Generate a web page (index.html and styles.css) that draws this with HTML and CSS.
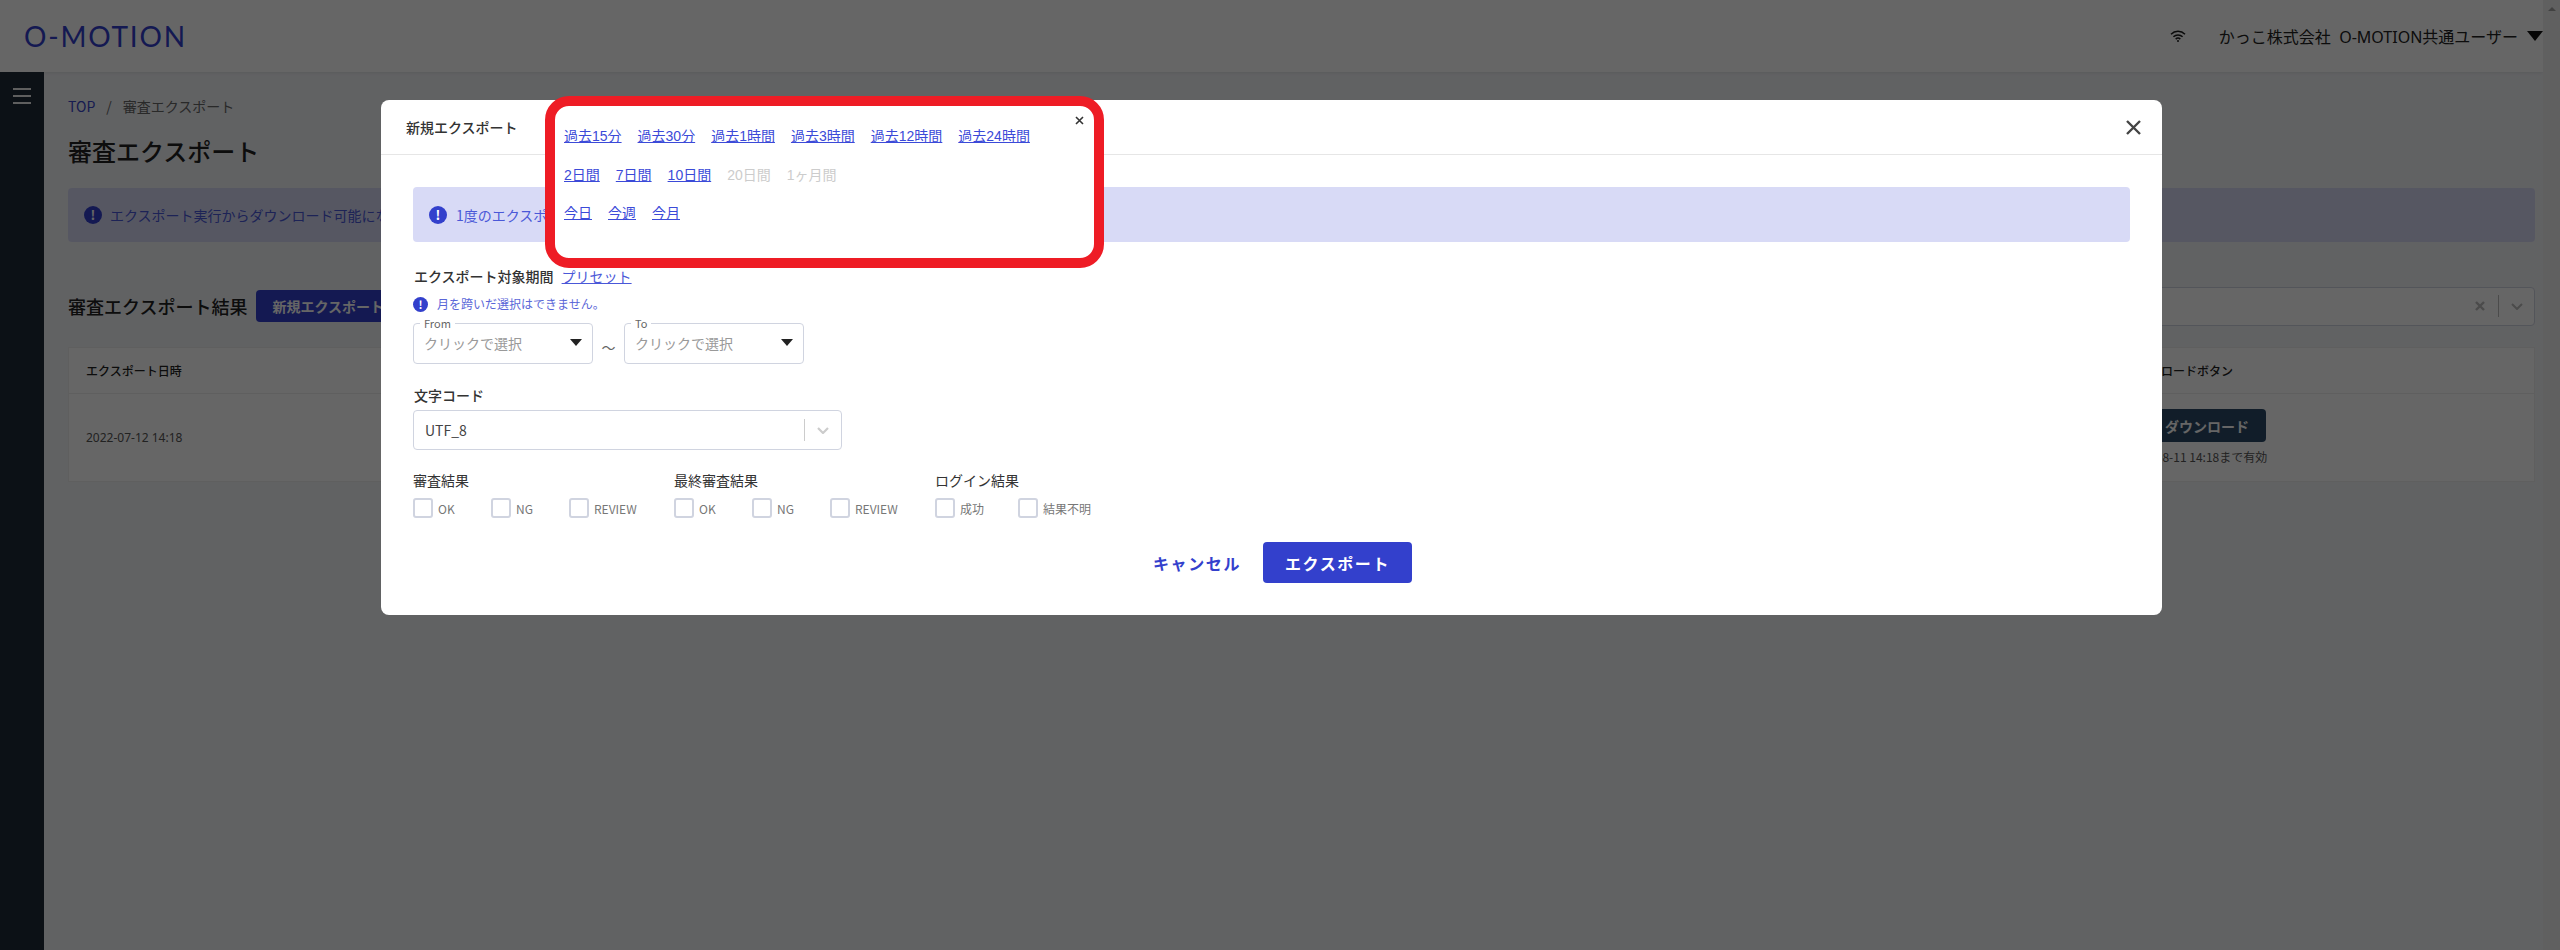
FILE: index.html
```html
<!DOCTYPE html>
<html lang="ja">
<head>
  <meta charset="UTF-8">
  <title>審査エクスポート - O-MOTION</title>
  <link rel="stylesheet" href="styles.css">
</head>
<body>
  <div class="page">
    <!-- Header -->
    <header class="topbar">
      <span class="logo">O-MOTION</span>
      <div class="topbar-right">
        <svg class="wifi" width="16" height="12" viewBox="0 0 16 12">
          <path d="M1 4.2a10 10 0 0 1 14 0M3.4 6.8a6.6 6.6 0 0 1 9.2 0M5.7 9.1a3.3 3.3 0 0 1 4.6 0" fill="none" stroke="#1a1a1a" stroke-width="1.5"/>
          <circle cx="8" cy="11" r="1" fill="#1a1a1a"/>
        </svg>
        <span class="user">かっこ株式会社&nbsp;&nbsp;O-MOTION共通ユーザー</span>
        <span class="user-caret"></span>
      </div>
    </header>

    <div class="main">
      <aside class="sidebar">
        <div class="burger"><i></i><i></i><i></i></div>
      </aside>

      <div class="content">
        <div class="crumbs"><a>TOP</a><span class="sep">/</span><span>審査エクスポート</span></div>
        <h1>審査エクスポート</h1>
        <div class="notice">
          <span class="info">!</span>
          <span>エクスポート実行からダウンロード可能にな</span>
        </div>
        <div class="result-head">
          <h2>審査エクスポート結果</h2>
          <button class="new-btn">新規エクスポート</button>
          <div class="filter">
            <svg width="10" height="10" viewBox="0 0 10 10"><path d="M1 1l8 8M9 1L1 9" stroke="#bbb" stroke-width="2.4"/></svg>
            <span class="filter-sep"></span>
            <svg width="12" height="7" viewBox="0 0 12 7"><path d="M1 1l5 5 5-5" fill="none" stroke="#bbb" stroke-width="2"/></svg>
          </div>
        </div>
        <div class="table">
          <div class="table-head">
            <span>エクスポート日時</span>
            <span class="col-dl">ダウンロードボタン</span>
          </div>
          <div class="table-row">
            <span class="cell-date">2022-07-12 14:18</span>
            <div class="col-dl">
              <button class="dl-btn">ダウンロード</button>
              <div class="dl-note">2022-08-11 14:18まで有効</div>
            </div>
          </div>
        </div>
      </div>
    </div>
    <div class="scrollbar"><span class="scroll-up"></span></div>
  </div>

  <!-- Modal -->
  <div class="overlay"></div>
  <div class="modal">
    <div class="modal-head">
      <span class="modal-title">新規エクスポート</span>
      <svg class="modal-close" width="15" height="15" viewBox="0 0 15 15"><path d="M1 1l13 13M14 1L1 14" stroke="#444" stroke-width="2.4"/></svg>
    </div>
    <div class="modal-body">
      <div class="modal-notice">
        <span class="info">!</span>
        <span>1度のエクスポ</span>
      </div>

      <div class="period-label">エクスポート対象期間<a class="preset">プリセット</a></div>
      <div class="period-hint"><span class="info small">!</span><span>月を跨いだ選択はできません。</span></div>
      <div class="range">
        <div class="date-box">
          <span class="legend">From</span>
          <span class="placeholder">クリックで選択</span>
          <span class="caret"></span>
        </div>
        <span class="tilde">～</span>
        <div class="date-box">
          <span class="legend">To</span>
          <span class="placeholder">クリックで選択</span>
          <span class="caret"></span>
        </div>
      </div>

      <div class="field-label">文字コード</div>
      <div class="select">
        <span>UTF_8</span>
        <span class="select-sep"></span>
        <svg width="12" height="7" viewBox="0 0 12 7"><path d="M1 1l5 5 5-5" fill="none" stroke="#ccc" stroke-width="2.2"/></svg>
      </div>

      <div class="checks">
        <div class="check-group g1">
          <div class="group-label">審査結果</div>
          <div class="check-row">
            <label class="check w78"><i></i>OK</label>
            <label class="check w78"><i></i>NG</label>
            <label class="check"><i></i>REVIEW</label>
          </div>
        </div>
        <div class="check-group g2">
          <div class="group-label">最終審査結果</div>
          <div class="check-row">
            <label class="check w78"><i></i>OK</label>
            <label class="check w78"><i></i>NG</label>
            <label class="check"><i></i>REVIEW</label>
          </div>
        </div>
        <div class="check-group">
          <div class="group-label">ログイン結果</div>
          <div class="check-row">
            <label class="check w83"><i></i>成功</label>
            <label class="check"><i></i>結果不明</label>
          </div>
        </div>
      </div>

      <div class="modal-actions">
        <a class="cancel">キャンセル</a>
        <button class="export-btn">エクスポート</button>
      </div>
    </div>
  </div>

  <!-- Preset popup -->
  <div class="popup">
    <svg class="popup-close" width="9" height="9" viewBox="0 0 9 9"><path d="M1 1l7 7M8 1L1 8" stroke="#333" stroke-width="1.6"/></svg>
    <div class="popup-row">
      <a>過去15分</a><a>過去30分</a><a>過去1時間</a><a>過去3時間</a><a>過去12時間</a><a>過去24時間</a>
    </div>
    <div class="popup-row">
      <a>2日間</a><a>7日間</a><a>10日間</a><span>20日間</span><span>1ヶ月間</span>
    </div>
    <div class="popup-row">
      <a>今日</a><a>今週</a><a>今月</a>
    </div>
  </div>
</body>
</html>
```

FILE: styles.css
```css
* {
  margin: 0;
  padding: 0;
  box-sizing: border-box;
}

body {
  font-family: "Noto Sans CJK JP", "Noto Sans", sans-serif;
  background: #f3f4f8;
  color: #333;
  height: 950px;
  overflow: hidden;
}

a {
  color: #3340cc;
}

button {
  font-family: inherit;
  border: none;
}

.page {
  height: 950px;
  display: flex;
  flex-direction: column;
  margin-right: 17px;
}

/* Header */
.topbar {
  height: 72px;
  flex: none;
  background: #fff;
  box-shadow: 0 1px 3px rgba(0, 0, 0, 0.08);
  display: flex;
  align-items: center;
  justify-content: space-between;
  padding-left: 24px;
}

.logo {
  font-family: "Lato", sans-serif;
  font-weight: 400;
  font-size: 28px;
  letter-spacing: 1.8px;
  color: #3340cc;
}

.topbar-right {
  display: flex;
  align-items: center;
}

.wifi {
  margin-right: 33px;
}

.user {
  font-family: "Noto Sans", "Noto Sans CJK JP", sans-serif;
  font-size: 16px;
  color: #222;
}

.user-caret {
  width: 0;
  height: 0;
  margin-left: 9px;
  border-left: 8px solid transparent;
  border-right: 8px solid transparent;
  border-top: 10px solid #111;
}

.main {
  flex: 1;
  display: flex;
}

.sidebar {
  width: 44px;
  flex: none;
  background: #202c38;
}

.burger {
  padding: 16px 13px 0;
}

.burger i {
  display: block;
  height: 2px;
  width: 18px;
  background: #eee;
  margin-bottom: 5px;
}

.content {
  flex: 1;
  padding: 25px 8px 0 24px;
}

.crumbs {
  font-size: 14px;
  line-height: 18px;
  color: #666;
}

.crumbs a {
  color: #3a48c8;
}

.crumbs .sep {
  margin: 0 11px;
}

h1 {
  font-size: 24px;
  font-weight: 500;
  line-height: 32px;
  color: #222;
  margin-top: 20px;
}

.notice {
  margin-top: 21px;
  height: 54px;
  background: #d8daf6;
  border-radius: 4px;
  padding-left: 16px;
  display: flex;
  align-items: center;
  gap: 8px;
  font-size: 14px;
  color: #4a58d8;
}

.info {
  width: 18px;
  height: 18px;
  flex: none;
  border-radius: 50%;
  background: #3340cc;
  color: #fff;
  font-size: 13px;
  font-weight: 700;
  line-height: 18px;
  text-align: center;
}

.info.small {
  width: 15px;
  height: 15px;
  font-size: 11px;
  line-height: 15px;
}

.result-head {
  margin-top: 48px;
  display: flex;
  align-items: center;
  height: 32px;
}

h2 {
  font-size: 18px;
  font-weight: 500;
  color: #222;
}

.new-btn {
  margin-left: 9px;
  width: 200px;
  height: 32px;
  background: #3340cc;
  color: #fff;
  border-radius: 4px;
  font-size: 14px;
  font-weight: 700;
  text-align: left;
  padding-left: 16px;
}

.filter {
  margin-left: auto;
  width: 400px;
  height: 39px;
  background: #fff;
  border: 1px solid #d0d4e0;
  border-radius: 4px;
  display: flex;
  align-items: center;
  justify-content: flex-end;
  padding-right: 11px;
}

.filter-sep {
  width: 1px;
  height: 22px;
  background: #bbb;
  margin: 0 12px 0 13px;
}

.table {
  margin-top: 25px;
  background: #fff;
  border: 1px solid #eee;
}

.table-head {
  height: 46px;
  display: flex;
  align-items: center;
  justify-content: space-between;
  padding-left: 17px;
  border-bottom: 1px solid #eee;
  font-size: 12px;
  font-weight: 500;
  color: #222;
}

.table-row {
  height: 87px;
  display: flex;
  align-items: center;
  justify-content: space-between;
  padding-left: 17px;
}

.cell-date {
  font-family: "Noto Sans", sans-serif;
  font-size: 12px;
  color: #555;
}

.col-dl {
  width: 409px;
}

.dl-btn {
  display: block;
  margin-left: 23px;
  width: 118px;
  height: 33px;
  background: #2c4a68;
  color: #fff;
  border-radius: 4px;
  font-size: 14px;
  font-weight: 700;
}

.dl-note {
  margin-top: 6px;
  font-size: 12px;
  line-height: 18px;
  color: #555;
}

.scrollbar {
  position: absolute;
  top: 0;
  right: 0;
  bottom: 0;
  width: 17px;
  background: #f1f1f1;
}

.scroll-up {
  display: block;
  width: 0;
  margin: 7px auto 0;
  border-left: 4px solid transparent;
  border-right: 4px solid transparent;
  border-bottom: 4px solid #a3a3a3;
}

/* Modal */
.overlay {
  position: fixed;
  inset: 0;
  background: rgba(0, 0, 0, 0.6);
}

.modal {
  position: absolute;
  left: 381px;
  top: 100px;
  width: 1781px;
  height: 515px;
  background: #fff;
  border-radius: 8px;
}

.modal-head {
  height: 55px;
  border-bottom: 1px solid #e6e6e6;
  display: flex;
  align-items: center;
  justify-content: space-between;
  padding: 0 21px 0 25px;
}

.modal-title {
  font-size: 14px;
  font-weight: 500;
  color: #333;
}

.modal-body {
  padding: 32px 32px 0;
}

.modal-notice {
  height: 55px;
  background: #d8daf6;
  border-radius: 4px;
  padding-left: 16px;
  display: flex;
  align-items: center;
  gap: 9px;
  font-size: 14px;
  color: #4a58d8;
}

.period-label {
  margin-top: 25px;
  padding-left: 1px;
  font-size: 14px;
  font-weight: 500;
  line-height: 18px;
  color: #333;
}

.preset {
  margin-left: 8px;
  font-weight: 400;
  text-decoration: underline;
  color: #4a58d8;
}

.period-hint {
  margin-top: 11px;
  display: flex;
  align-items: center;
  gap: 9px;
  font-size: 12px;
  line-height: 16px;
  color: #5a66d8;
}

.range {
  margin-top: 11px;
  display: flex;
  align-items: center;
}

.date-box {
  position: relative;
  width: 180px;
  height: 41px;
  border: 1px solid #d0d4e0;
  border-radius: 4px;
  display: flex;
  align-items: center;
  justify-content: space-between;
  padding: 0 10px 2px 10px;
}

.legend {
  position: absolute;
  top: -7px;
  left: 6px;
  padding: 0 4px;
  background: #fff;
  font-size: 11px;
  line-height: 12px;
  color: #666;
}

.placeholder {
  font-size: 14px;
  color: #999;
}

.caret {
  width: 0;
  height: 0;
  border-left: 6.5px solid transparent;
  border-right: 6.5px solid transparent;
  border-top: 7px solid #222;
}

.tilde {
  width: 31px;
  padding-top: 6px;
  text-align: center;
  font-size: 14px;
  color: #666;
}

.field-label {
  margin-top: 22px;
  padding-left: 1px;
  font-size: 14px;
  font-weight: 500;
  line-height: 18px;
  color: #333;
}

.select {
  margin-top: 6px;
  width: 429px;
  height: 40px;
  border: 1px solid #d0d4e0;
  border-radius: 4px;
  display: flex;
  align-items: center;
  padding: 0 12px 0 11px;
  font-size: 14px;
  color: #444;
}

.select-sep {
  width: 1px;
  height: 22px;
  background: #ccc;
  margin: 0 12px 0 auto;
}

.checks {
  margin-top: 21px;
  display: flex;
}

.check-group {
  flex: none;
}

.check-group.g1,
.check-group.g2 {
  width: 261px;
}

.group-label {
  font-size: 14px;
  line-height: 18px;
  color: #333;
}

.check-row {
  margin-top: 9px;
  display: flex;
}

.check {
  display: flex;
  align-items: center;
  gap: 5px;
  font-size: 12px;
  color: #777;
}

.check.w78 {
  width: 78px;
}

.check.w83 {
  width: 83px;
}

.check i {
  width: 20px;
  height: 20px;
  border: 2px solid #d0d4e0;
  border-radius: 3px;
}

.modal-actions {
  margin-top: 24px;
  display: flex;
  justify-content: center;
  align-items: center;
}

.cancel {
  padding: 0 22px;
  font-size: 16px;
  font-weight: 700;
  letter-spacing: 1.6px;
  color: #3340cc;
}

.export-btn {
  width: 149px;
  height: 41px;
  background: #3340cc;
  color: #fff;
  border-radius: 4px;
  font-size: 16px;
  font-weight: 700;
  letter-spacing: 1.6px;
}

/* Preset popup */
.popup {
  position: absolute;
  left: 545px;
  top: 96px;
  width: 559px;
  height: 172px;
  background: #fff;
  border: 10px solid #ee1c25;
  border-radius: 24px;
  padding: 20px 0 0 9px;
  font-family: "Liberation Sans", "Noto Sans CJK JP", sans-serif;
  font-size: 14px;
}

.popup-close {
  position: absolute;
  top: 10px;
  right: 10px;
}

.popup-row {
  display: flex;
  gap: 16px;
  height: 38.5px;
  line-height: 20px;
  white-space: nowrap;
}

.popup-row a {
  color: #3b4ad8;
  text-decoration: underline;
}

.popup-row span {
  color: #ccc;
}
```
